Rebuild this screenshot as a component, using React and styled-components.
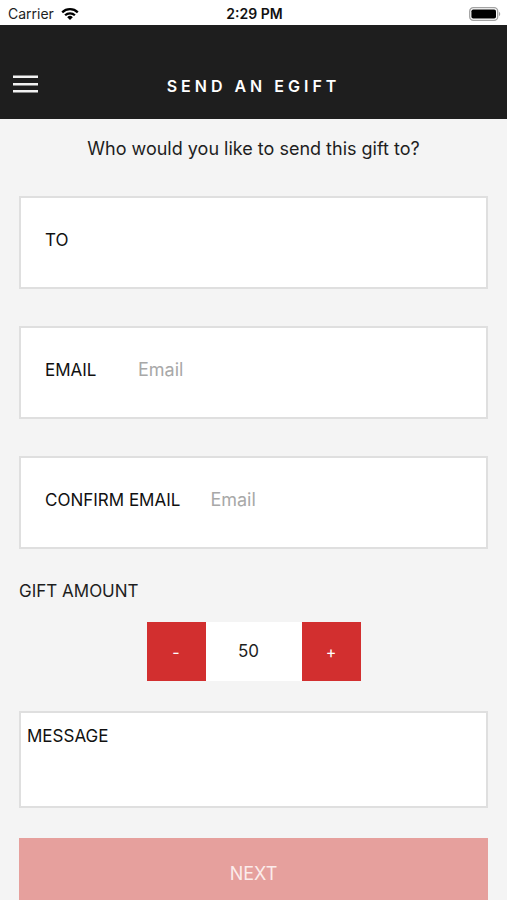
import React, { useState } from 'react';
import styled, { createGlobalStyle } from 'styled-components';

const GlobalStyle = createGlobalStyle`
  * {
    box-sizing: border-box;
  }

  body {
    margin: 0;
    background: #f4f4f4;
  }

  button, input, textarea {
    font: inherit;
    color: inherit;
    border: none;
    border-radius: 0;
    outline: none;
    padding: 0;
    margin: 0;
  }
`;

const Screen = styled.div`
  display: flex;
  flex-direction: column;
  height: 100vh;
  background: #f4f4f4;
  color: #1e1e1e;
  font-family: Inter, 'Liberation Sans', sans-serif;
  font-size: 17px;
  line-height: 20px;
`;

const StatusBar = styled.div`
  display: grid;
  grid-template-columns: 1fr auto 1fr;
  align-items: center;
  flex: none;
  height: 25px;
  padding: 2px 6px 0 8px;
  background: #fff;
  font-size: 14px;
`;

const Carrier = styled.div`
  display: flex;
  align-items: center;
  gap: 7px;
`;

const Clock = styled.div`
  font-weight: 600;
  color: #111;
`;

const Battery = styled.svg`
  justify-self: end;
`;

const Header = styled.header`
  display: grid;
  grid-template-columns: 1fr auto 1fr;
  align-items: center;
  flex: none;
  height: 94px;
  padding: 24px 12px 0;
  background: #1e1e1e;
  color: #fff;
`;

const MenuButton = styled.button`
  display: flex;
  justify-self: start;
  background: none;
  cursor: pointer;
`;

const Title = styled.h1`
  margin: 0;
  padding-top: 3px;
  font-size: 16px;
  font-weight: 600;
  letter-spacing: 4px;
`;

const Form = styled.form`
  flex: 1;
  display: flex;
  flex-direction: column;
  min-height: 0;
  padding: 20px 19px 0;
  overflow-y: auto;
  scrollbar-width: none;

  & > * {
    flex: none;
  }
`;

const Prompt = styled.p`
  margin: 0 0 37px;
  font-size: 18px;
  text-align: center;
`;

const Fields = styled.div`
  display: flex;
  flex-direction: column;
  gap: 37px;
`;

const FieldBox = styled.div`
  display: flex;
  align-items: center;
  gap: 30px;
  height: 93px;
  padding: 0 24px 6px;
  background: #fff;
  border: 2px solid #dfdfdf;
`;

const Label = styled.label`
  min-width: 63px;
  color: #111;
`;

const Input = styled.input`
  flex: 1;
  min-width: 0;
  background: transparent;
  font-size: 18px;

  &::placeholder {
    color: #a8a8a8;
    opacity: 1;
  }
`;

const AmountLabel = styled.label`
  margin: 32px 0 21px;
`;

const Stepper = styled.div`
  display: flex;
  align-self: center;
  height: 59px;
  background: #fff;
`;

const StepButton = styled.button`
  width: 59px;
  background: #d22f2f;
  color: #fff;
  font-size: 16px;
  cursor: pointer;
`;

const Amount = styled.input`
  width: 96px;
  padding: 0 10px 2px 0;
  background: transparent;
  text-align: center;
`;

const Message = styled.textarea`
  width: 100%;
  height: 97px;
  margin: 30px 0;
  padding: 13px 6px;
  background: #fff;
  border: 2px solid #dfdfdf;
  resize: none;

  &::placeholder {
    color: #111;
    opacity: 1;
  }
`;

const NextButton = styled.button`
  width: 100%;
  height: 72px;
  background: #e6a09d;
  color: #fbeceb;
  font-size: 18px;
`;

const WifiIcon = () => (
  <svg width="18" height="14" viewBox="0 0 18 14" aria-hidden="true">
    <g fill="none" stroke="#000" strokeWidth="2.3">
      <path d="M1.2 5.3a11.2 11.2 0 0 1 15.6 0" />
      <path d="M4.1 8.3a7 7 0 0 1 9.8 0" />
    </g>
    <path d="M9 13 6.2 10.2a4 4 0 0 1 5.6 0z" />
  </svg>
);

const BatteryIcon = () => (
  <Battery width="32" height="14" viewBox="0 0 32 14" aria-hidden="true">
    <rect x="0.7" y="0.7" width="28" height="12.6" rx="3.6" fill="#fff" stroke="#a3a3a3" strokeWidth="1.3" />
    <rect x="2.4" y="2.4" width="24.6" height="9.2" rx="1.8" />
    <path d="M30 4.8c1.7.7 1.7 3.7 0 4.4z" fill="#a3a3a3" />
  </Battery>
);

const MenuIcon = () => (
  <svg width="26" height="20" viewBox="0 0 26 20" aria-hidden="true">
    <path d="M1 2.7h25M1 10.2h25M1 17.3h25" stroke="#f2f2f2" strokeWidth="2.6" />
  </svg>
);

const fields = [
  { id: 'to', label: 'TO', type: 'text' },
  { id: 'email', label: 'EMAIL', type: 'email', placeholder: 'Email' },
  { id: 'confirm', label: 'CONFIRM EMAIL', type: 'email', placeholder: 'Email' },
];

const App = () => {
  const [amount, setAmount] = useState(50);

  return (
    <Screen>
      <GlobalStyle />
      <StatusBar>
        <Carrier>Carrier <WifiIcon /></Carrier>
        <Clock>2:29 PM</Clock>
        <BatteryIcon />
      </StatusBar>
      <Header>
        <MenuButton type="button" aria-label="Menu"><MenuIcon /></MenuButton>
        <Title>SEND AN EGIFT</Title>
      </Header>
      <Form onSubmit={e => e.preventDefault()}>
        <Prompt>Who would you like to send this gift to?</Prompt>
        <Fields>
          {fields.map(({ id, label, type, placeholder }) => (
            <FieldBox key={id}>
              <Label htmlFor={id}>{label}</Label>
              <Input id={id} type={type} placeholder={placeholder} />
            </FieldBox>
          ))}
        </Fields>
        <AmountLabel htmlFor="amount">GIFT AMOUNT</AmountLabel>
        <Stepper>
          <StepButton type="button" onClick={() => setAmount(Math.max(0, amount - 1))}>-</StepButton>
          <Amount
            id="amount"
            inputMode="numeric"
            value={amount}
            onChange={e => setAmount(Number(e.target.value) || 0)}
          />
          <StepButton type="button" onClick={() => setAmount(amount + 1)}>+</StepButton>
        </Stepper>
        <Message aria-label="Message" placeholder="MESSAGE" />
        <NextButton type="submit" disabled>NEXT</NextButton>
      </Form>
    </Screen>
  );
};

export default App;
